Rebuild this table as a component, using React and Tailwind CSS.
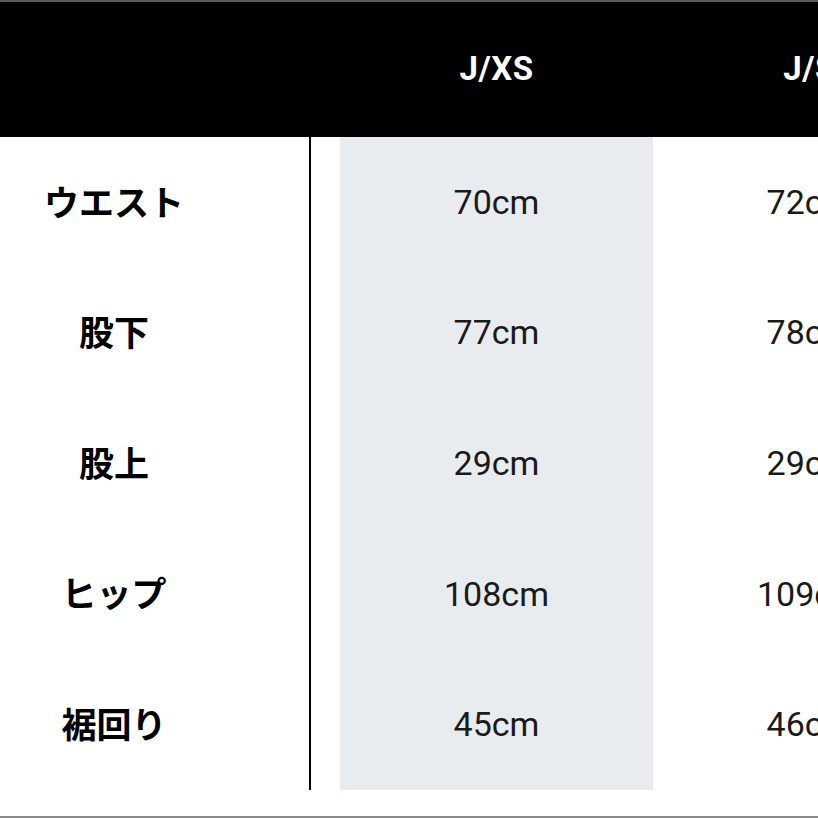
const rows = [
  { label: "ウエスト", values: ["70cm", "72cm"] },
  { label: "股下", values: ["77cm", "78cm"] },
  { label: "股上", values: ["29cm", "29cm"] },
  { label: "ヒップ", values: ["108cm", "109cm"] },
  { label: "裾回り", values: ["45cm", "46cm"] },
];

const sizes = ["J/XS", "J/S"];

export default function App() {
  return (
    <div className="w-[818px] h-[818px] overflow-hidden bg-white flex flex-col">
      <div className="h-[2px] shrink-0 bg-[#5a5a5a]" />
      <div className="h-[135px] shrink-0 bg-black flex items-center">
        <div className="w-[340px] shrink-0" />
        {sizes.map((s) => (
          <div
            key={s}
            className="w-[313px] shrink-0 text-center text-white font-bold text-[33px] leading-none pb-[2px] font-['Roboto',sans-serif] tracking-[0.5px]"
          >
            {s}
          </div>
        ))}
      </div>
      <div className="h-[653px] shrink-0 flex">
        <div className="w-[309px] shrink-0 flex flex-col">
          {rows.map((r) => (
            <div key={r.label} className="flex-1 flex items-center pb-[3px]">
              <div className="w-[228px] text-center text-black font-bold text-[35px] font-['Noto_Sans_CJK_JP',sans-serif]">
                {r.label}
              </div>
            </div>
          ))}
        </div>
        <div className="w-[2px] shrink-0 bg-black" />
        <div className="w-[29px] shrink-0" />
        {[0, 1].map((c) => (
          <div
            key={c}
            className={`w-[313px] shrink-0 flex flex-col ${c === 0 ? "bg-[#e9ecee]" : "bg-white"}`}
          >
            {rows.map((r) => (
              <div
                key={r.label}
                className="flex-1 flex items-center justify-center text-[34px] text-[#1a1a1a] font-['Roboto',sans-serif]"
              >
                {r.values[c]}
              </div>
            ))}
          </div>
        ))}
      </div>
      <div className="flex-1 border-b-2 border-[#8a8a8a]" />
    </div>
  );
}
